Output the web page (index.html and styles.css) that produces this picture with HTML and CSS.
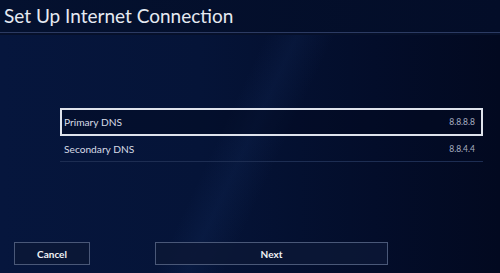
FILE: index.html
```html
<!DOCTYPE html>
<html>
<head>
<meta charset="utf-8">
<link rel="stylesheet" href="styles.css">
</head>
<body>
<div class="screen">
  <header class="header">
    <h1 class="title">Set Up Internet Connection</h1>
  </header>
  <main class="content">
    <div class="list">
      <div class="row row-selected">
        <span class="label">Primary DNS</span>
        <span class="value">8.8.8.8</span>
      </div>
      <div class="row">
        <span class="label">Secondary DNS</span>
        <span class="value">8.8.4.4</span>
      </div>
    </div>
  </main>
  <footer class="footer">
    <button class="btn btn-cancel">Cancel</button>
    <button class="btn btn-next">Next</button>
  </footer>
</div>
</body>
</html>
```
FILE: styles.css
```css
html, body {
  margin: 0;
  padding: 0;
}
body {
  width: 500px;
  height: 273px;
  overflow: hidden;
  font-family: Lato, "Open Sans", sans-serif;
}
.screen {
  width: 500px;
  height: 273px;
  display: flex;
  flex-direction: column;
  background:
    linear-gradient(115deg, rgba(0,0,0,0) 45%, rgba(40,80,150,0.10) 50%, rgba(0,0,0,0) 56%),
    linear-gradient(90deg, #06163d 0%, #051438 40%, #030d2a 75%, #020920 100%);
}
.header {
  height: 32px;
  border-bottom: 1px solid #2c3b63;
  box-shadow: 0 2px 0 #06102a;
  background: linear-gradient(90deg, #04112f 0%, #030d28 100%);
  display: flex;
  align-items: flex-end;
}
.title {
  margin: 0 0 3px 4px;
  font-weight: 400;
  font-size: 19px;
  line-height: 26px;
  color: #e6eaf2;
}
.content {
  flex: 1;
  padding: 75px 17px 0 60px;
}
.list {
  display: flex;
  flex-direction: column;
}
.row {
  height: 25px;
  display: flex;
  align-items: center;
  justify-content: space-between;
  padding: 0 8px 0 4px;
  border-bottom: 1px solid #1d2d52;
  color: #d6dbe6;
}
.row-selected {
  height: 24px;
  border: 2px solid #dfe3ec;
  padding: 0 6px 0 2px;
  background: rgba(2, 8, 30, 0.45);
}
.label {
  font-size: 10.2px;
}
.value {
  font-size: 8.5px;
  color: #a9b0c2;
}
.footer {
  height: 27px;
  padding: 0 0 4px 14px;
  display: flex;
  gap: 65px;
  align-items: flex-start;
}
.btn {
  height: 23px;
  border: 1px solid #4a5878;
  background: rgba(12, 24, 54, 0.85);
  color: #f0f2f6;
  font-family: Lato, "Open Sans", sans-serif;
  font-size: 10px;
  font-weight: 700;
  padding: 0;
}
.btn-cancel {
  width: 76px;
}
.btn-next {
  width: 233px;
}
```
